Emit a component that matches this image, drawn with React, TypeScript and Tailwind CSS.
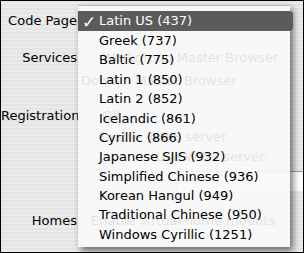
import React from "react";

const items = [
  "Latin US (437)",
  "Greek (737)",
  "Baltic (775)",
  "Latin 1 (850)",
  "Latin 2 (852)",
  "Icelandic (861)",
  "Cyrillic (866)",
  "Japanese SJIS (932)",
  "Simplified Chinese (936)",
  "Korean Hangul (949)",
  "Traditional Chinese (950)",
  "Windows Cyrillic (1251)",
];

const Label: React.FC<{ text: string }> = ({ text }) => (
  <div className="w-[76px] shrink-0 text-right">{text}</div>
);

export default function App() {
  return (
    <div
      className="relative w-[304px] h-[253px] overflow-hidden border border-black text-[13px] text-black bg-[repeating-linear-gradient(0deg,#ebebeb_0px,#ebebeb_2px,#e4e4e4_2px,#e4e4e4_4px)]"
      style={{ fontFamily: '"DejaVu Sans", "Liberation Sans", sans-serif' }}
    >
      {/* window behind the menu */}
      <div className="flex flex-col pt-[10px]">
        <div className="flex h-[20px] items-center">
          <Label text="Code Page" />
        </div>

        {/* Services */}
        <div className="mt-[17px] flex h-[20px] items-center">
          <Label text="Services" />
          <span className="ml-[25px]">Workgroup Master Browser</span>
        </div>
        <div className="mt-[3px] flex h-[20px] items-center">
          <div className="w-[76px] shrink-0" />
          <span className="ml-[4px]">Domain Master Browser</span>
        </div>

        {/* Registration */}
        <div className="mt-[15px] flex h-[20px] items-center">
          <Label text="Registration" />
          <span className="ml-[25px]">Off</span>
        </div>
        <div className="mt-[1px] flex h-[20px] items-center">
          <div className="w-[76px] shrink-0" />
          <span className="ml-[21px]">Enable WINS server</span>
        </div>
        <div className="flex h-[20px] items-center">
          <div className="w-[76px] shrink-0" />
          <span className="ml-[79px]">Use WINS server:</span>
        </div>
        <div className="mt-[4px] flex h-[20px]">
          <div className="w-[176px] shrink-0" />
          <div className="flex-1 border-t border-[#6a6a6a] border-l border-[#9a9a9a] bg-white" />
        </div>

        {/* Homes */}
        <div className="mt-[20px] flex h-[20px] items-center">
          <Label text="Homes" />
          <span className="ml-[14px]">Enable virtual home mounts</span>
        </div>
      </div>

      {/* popup menu */}
      <div className="absolute left-[77px] top-[4px] w-[212px] h-[242px] border-t border-[#bdbdbd] bg-[rgba(248,248,248,0.91)] pt-[5px] shadow-[3px_4px_7px_rgba(0,0,0,0.55)]">
        {items.map((item, i) => (
          <div
            key={item}
            className={
              i === 0
                ? "relative flex h-[20px] w-[215px] items-center rounded-r-[4px] bg-[#5b5b5b] pl-[21px] text-white"
                : "relative flex h-[19.4px] items-center pl-[21px] text-black"
            }
          >
            {i === 0 && (
              <span className="absolute left-[4px] top-[-1px] text-[17px] font-bold">✓</span>
            )}
            {item}
          </div>
        ))}
      </div>
    </div>
  );
}
